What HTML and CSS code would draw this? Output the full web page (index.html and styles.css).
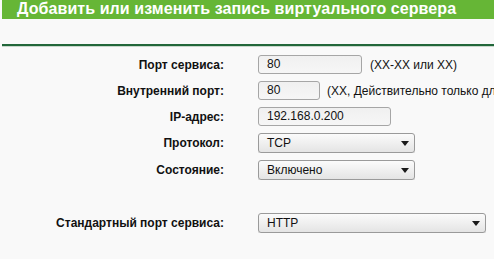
FILE: index.html
```html
<!DOCTYPE html>
<html>
<head>
<meta charset="utf-8">
<link rel="stylesheet" href="styles.css">
</head>
<body>
<div class="title">Добавить или изменить запись виртуального сервера</div>
<div class="rule"></div>
<div class="form">
  <div class="label">Порт сервиса:</div>
  <div class="field"><div class="input w104">80</div><span class="hint">(XX-XX или XX)</span></div>

  <div class="label">Внутренний порт:</div>
  <div class="field"><div class="input w62">80</div><span class="hint hint2">(XX, Действительно только для одного порта)</span></div>

  <div class="label">IP-адрес:</div>
  <div class="field"><div class="input w133">192.168.0.200</div></div>

  <div class="label">Протокол:</div>
  <div class="field"><div class="select w157">TCP<span class="arrow"></span></div></div>

  <div class="label">Состояние:</div>
  <div class="field"><div class="select w157">Включено<span class="arrow"></span></div></div>

  <div class="label spaced">Стандартный порт сервиса:</div>
  <div class="field spaced"><div class="select w228">HTTP<span class="arrow"></span></div></div>
</div>
</body>
</html>
```
FILE: styles.css
```css
html, body {
  margin: 0;
  padding: 0;
  background: #f9f9f9;
  overflow: hidden;
}
body {
  width: 494px;
  height: 259px;
  font-family: "Liberation Sans", Arial, sans-serif;
  color: #111;
}
.title {
  margin-left: 2px;
  height: 19px;
  line-height: 17px;
  padding-left: 15px;
  background: #66b636;
  color: #fff;
  font-weight: bold;
  font-size: 16px;
  letter-spacing: 0.08px;
  white-space: nowrap;
  overflow: hidden;
}
.rule {
  margin: 25px 0 0 2px;
  height: 2px;
  background: #22673a;
  border-bottom: 1px solid #c8d8cc;
}
.form {
  display: grid;
  grid-template-columns: 224px 236px;
  column-gap: 34px;
  row-gap: 7px;
  margin-top: 8px;
  align-items: center;
}
.label {
  text-align: right;
  font-weight: bold;
  font-size: 12px;
  white-space: nowrap;
}
.field {
  display: flex;
  align-items: center;
  white-space: nowrap;
  min-width: 0;
  overflow: hidden;
}
.spaced {
  margin-top: 26px;
}
.input, .select {
  flex-shrink: 0;
}
.input {
  box-sizing: border-box;
  height: 19px;
  border: 1px solid #a6a6a6;
  border-radius: 3px;
  background: linear-gradient(#f0f0f0, #f6f6f6);
  font-size: 12px;
  line-height: 17px;
  padding-left: 8px;
  color: #111;
}
.select {
  position: relative;
  box-sizing: border-box;
  height: 20px;
  border: 1px solid #9a9a9a;
  border-radius: 3px;
  background: linear-gradient(#fbfbfb, #e4e4e4);
  box-shadow: 0 1px 0 #d6d6d6;
  font-size: 12px;
  line-height: 18px;
  padding-left: 8px;
  color: #111;
}
.arrow {
  position: absolute;
  right: 5px;
  top: 7px;
  width: 0;
  height: 0;
  border-left: 4px solid transparent;
  border-right: 4px solid transparent;
  border-top: 5px solid #1a1a1a;
}
.w104 { width: 104px; }
.w62 { width: 62px; }
.w133 { width: 133px; }
.w157 { width: 157px; }
.w228 { width: 228px; }
.hint {
  font-size: 12px;
  margin-left: 8px;
  color: #111;
}
.hint2 {
  margin-left: 7px;
}
```
